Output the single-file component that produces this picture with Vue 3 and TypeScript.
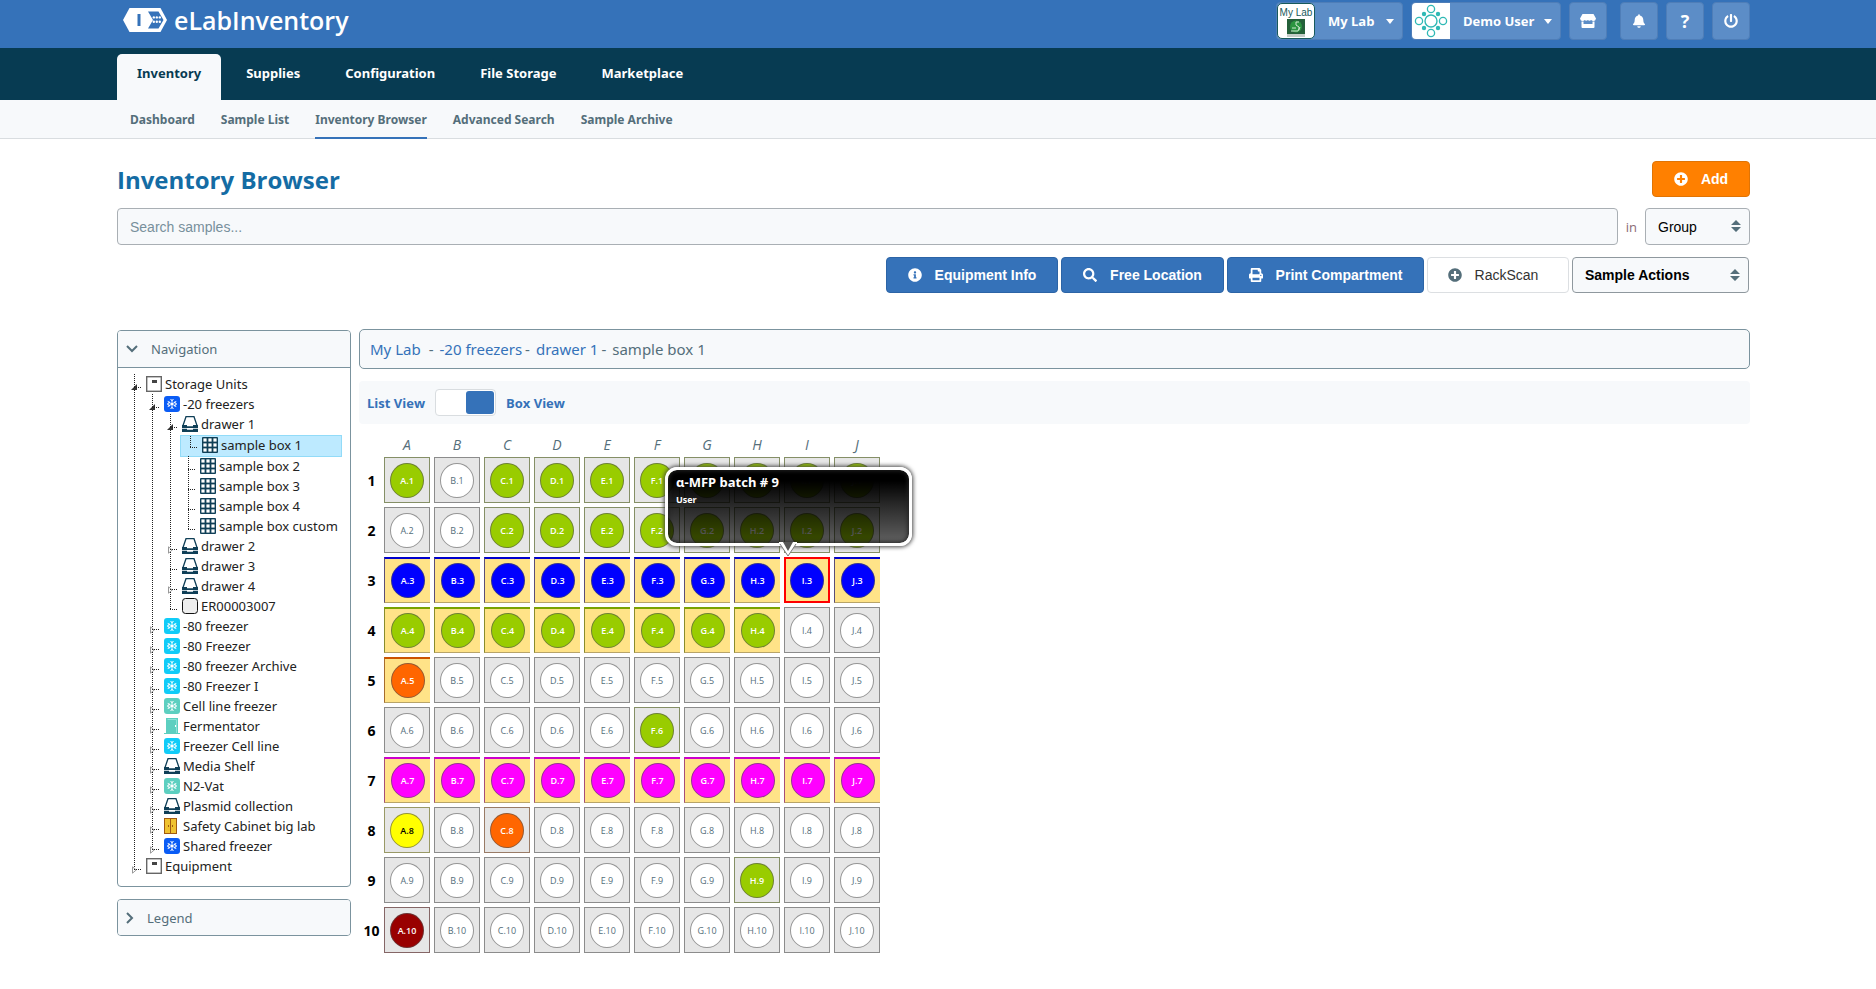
<script setup lang="ts">
import { ref } from 'vue'

type IconName = 'unit' | 'freezer' | 'drawer' | 'box' | 'blank' | 'door' | 'cabinet'

interface TreeRow {
  label: string
  icon: IconName
  color?: string
  /** One entry per indent level; the last entry is the branch of the row itself. */
  guides: ('line' | 'tee' | 'end' | 'none')[]
  toggle?: 'open' | 'closed'
  selected?: boolean
}

interface Well {
  id: string
  color: string
  marked: boolean
  dark: boolean
}

const mainTabs = ['Inventory', 'Supplies', 'Configuration', 'File Storage', 'Marketplace']
const subTabs = ['Dashboard', 'Sample List', 'Inventory Browser', 'Advanced Search', 'Sample Archive']

const BLUE = '#0a5cf5'
const CYAN = '#10ccf8'
const TEAL = '#5ccfc0'

const child = (
  label: string,
  icon: IconName,
  color?: string,
  toggle?: 'open' | 'closed',
  last = false,
): TreeRow => ({ label, icon, color, toggle, guides: ['line', last ? 'end' : 'tee'] })

const tree: TreeRow[] = [
  { label: 'Storage Units', icon: 'unit', guides: ['tee'], toggle: 'open' },
  child('-20 freezers', 'freezer', BLUE, 'open'),
  { label: 'drawer 1', icon: 'drawer', guides: ['line', 'line', 'tee'], toggle: 'open' },
  { label: 'sample box 1', icon: 'box', guides: ['line', 'line', 'line', 'end'], selected: true },
  { label: 'sample box 2', icon: 'box', guides: ['line', 'line', 'line', 'tee'] },
  { label: 'sample box 3', icon: 'box', guides: ['line', 'line', 'line', 'tee'] },
  { label: 'sample box 4', icon: 'box', guides: ['line', 'line', 'line', 'tee'] },
  { label: 'sample box custom', icon: 'box', guides: ['line', 'line', 'line', 'end'] },
  { label: 'drawer 2', icon: 'drawer', guides: ['line', 'line', 'tee'], toggle: 'closed' },
  { label: 'drawer 3', icon: 'drawer', guides: ['line', 'line', 'tee'] },
  { label: 'drawer 4', icon: 'drawer', guides: ['line', 'line', 'tee'], toggle: 'closed' },
  { label: 'ER00003007', icon: 'blank', guides: ['line', 'line', 'end'] },
  child('-80 freezer', 'freezer', CYAN, 'closed'),
  child('-80 Freezer', 'freezer', CYAN, 'closed'),
  child('-80 freezer Archive', 'freezer', CYAN, 'closed'),
  child('-80 Freezer I', 'freezer', CYAN, 'closed'),
  child('Cell line freezer', 'freezer', TEAL, 'closed'),
  child('Fermentator', 'door', TEAL, 'closed'),
  child('Freezer Cell line', 'freezer', CYAN, 'closed'),
  child('Media Shelf', 'drawer', undefined, 'closed'),
  child('N2-Vat', 'freezer', TEAL, 'closed'),
  child('Plasmid collection', 'drawer', undefined, 'closed'),
  child('Safety Cabinet big lab', 'cabinet', undefined, 'closed'),
  child('Shared freezer', 'freezer', BLUE, 'closed', true),
  { label: 'Equipment', icon: 'unit', guides: ['end'], toggle: 'closed' },
]

const columns = 'ABCDEFGHIJ'.split('')
const palette: Record<string, string> = {
  g: '#99cc00',
  b: '#0000ff',
  m: '#ff00ff',
  o: '#ff6600',
  y: '#ffff00',
  r: '#990000',
  '.': '',
}
const layout = [
  'g.gggggggg',
  '..gggggggg',
  'BBBBBBBBBB',
  'GGGGGGGG..',
  'O.........',
  '.....g....',
  'MMMMMMMMMM',
  'y.o.......',
  '.......g..',
  'r.........',
]
const wells: Well[][] = layout.map((line, r) =>
  line.split('').map((code, c) => ({
    id: `${columns[c]}.${r + 1}`,
    color: palette[code.toLowerCase()],
    marked: code !== code.toLowerCase(),
    dark: code === 'y',
  })),
)

const query = ref('')
const scope = ref('Group')
const action = ref('Sample Actions')
const boxView = ref(true)
const hovered = ref('I.3')

const paths = {
  plus: 'M256 8C119 8 8 119 8 256s111 248 248 248 248-111 248-248S393 8 256 8zm144 276c0 6.6-5.4 12-12 12h-92v92c0 6.6-5.4 12-12 12h-56c-6.6 0-12-5.4-12-12v-92h-92c-6.6 0-12-5.4-12-12v-56c0-6.6 5.4-12 12-12h92v-92c0-6.6 5.4-12 12-12h56c6.6 0 12 5.4 12 12v92h92c6.6 0 12 5.4 12 12v56z',
  info: 'M256 8C119.043 8 8 119.083 8 256c0 136.997 111.043 248 248 248s248-111.003 248-248C504 119.083 392.957 8 256 8zm0 110c23.196 0 42 18.804 42 42s-18.804 42-42 42-42-18.804-42-42 18.804-42 42-42zm56 254c0 6.627-5.373 12-12 12h-88c-6.627 0-12-5.373-12-12v-24c0-6.627 5.373-12 12-12h12v-64h-12c-6.627 0-12-5.373-12-12v-24c0-6.627 5.373-12 12-12h64c6.627 0 12 5.373 12 12v100h12c6.627 0 12 5.373 12 12v24z',
  search: 'M505 442.7L405.3 343c-4.5-4.5-10.6-7-17-7H372c27.6-35.3 44-79.7 44-128C416 93.1 322.9 0 208 0S0 93.1 0 208s93.1 208 208 208c48.3 0 92.7-16.4 128-44v16.3c0 6.4 2.5 12.5 7 17l99.7 99.7c9.4 9.4 24.6 9.4 33.9 0l28.3-28.3c9.4-9.4 9.4-24.6.1-34zM208 336c-70.7 0-128-57.2-128-128 0-70.7 57.2-128 128-128 70.7 0 128 57.2 128 128 0 70.7-57.2 128-128 128z',
  print: 'M448 192V77.25c0-8.49-3.37-16.62-9.37-22.63L393.37 9.37c-6-6-14.14-9.37-22.63-9.37H96C78.33 0 64 14.33 64 32v160c-35.35 0-64 28.65-64 64v112c0 8.84 7.16 16 16 16h48v96c0 17.67 14.33 32 32 32h320c17.67 0 32-14.33 32-32v-96h48c8.84 0 16-7.16 16-16V256c0-35.35-28.65-64-64-64zm-64 256H128v-96h256v96zm0-224H128V64h192v48c0 8.84 7.16 16 16 16h48v96zm48 72c-13.25 0-24-10.75-24-24 0-13.26 10.75-24 24-24s24 10.74 24 24c0 13.25-10.75 24-24 24z',
}
const tools = [
  { label: 'Equipment Info', path: paths.info, cls: 'equipment' },
  { label: 'Free Location', path: paths.search, cls: 'location' },
  { label: 'Print Compartment', path: paths.print, cls: 'print' },
]
</script>

<template>
  <div class="page">
    <header class="top">
      <a class="brand" href="#">
        <svg width="44" height="24" viewBox="0 0 44 24" aria-hidden="true">
          <path d="M6.5 0H37.5L44 12L37.5 24H6.5L0 12Z" fill="#fff" />
          <path d="M14.5 6h3v12h-3z" fill="#3572b9" />
          <path d="M25 3.5H35.5L40.5 12L35.5 20.5H25L30 12Z" fill="#3572b9" />
          <g fill="#fff">
            <circle v-for="x in 3" :key="x" :cx="27.8 + x * 3" cy="9.4" r="1.2" />
            <circle v-for="x in 3" :key="x + 3" :cx="27.8 + x * 3" cy="13.8" r="1.2" />
          </g>
        </svg>
        <span>eLabInventory</span>
      </a>
      <div class="user-tools">
        <button class="chip lab" type="button">
          <span class="avatar lab-avatar">
            <span class="lab-name">My Lab</span>
            <svg width="18" height="18" viewBox="0 0 18 18" aria-hidden="true">
              <rect width="18" height="15" fill="#24603a" />
              <rect y="15" width="18" height="3" fill="#c3cdc8" />
              <circle cx="9" cy="7.5" r="6" fill="#2b9440" />
              <path d="M4 12h7l2-4M12 3h-3v3l3 2v3M5 9h4" stroke="#cfe8d2" fill="none" />
            </svg>
          </span>
          <span class="chip-text">My Lab</span>
          <svg class="caret" width="8" height="5" viewBox="0 0 8 5" aria-hidden="true"><path d="M0 0h8L4 5z" fill="#fff" /></svg>
        </button>
        <button class="chip user" type="button">
          <span class="avatar">
            <svg width="34" height="34" viewBox="0 0 34 34" fill="none" stroke="#2fb9b5" aria-hidden="true">
              <circle cx="17" cy="17" r="6" stroke-width="1.4" />
              <g stroke-width="1.3">
                <circle cx="17" cy="5" r="3.6" /><circle cx="17" cy="29" r="3.6" />
                <circle cx="5" cy="17" r="3.6" /><circle cx="29" cy="17" r="3.6" />
              </g>
              <g fill="#2fb9b5" stroke="none">
                <circle cx="10" cy="10" r="2.2" /><circle cx="24" cy="10" r="2.2" />
                <circle cx="10" cy="24" r="2.2" /><circle cx="24" cy="24" r="2.2" />
              </g>
            </svg>
          </span>
          <span class="chip-text">Demo User</span>
          <svg class="caret" width="8" height="5" viewBox="0 0 8 5" aria-hidden="true"><path d="M0 0h8L4 5z" fill="#fff" /></svg>
        </button>
        <button class="square store" type="button" aria-label="Marketplace">
          <svg width="16" height="14" viewBox="0 0 16 14" fill="#fff" aria-hidden="true">
            <path d="M2.5 0h11L16 4.5Q15.5 7 13.5 7Q12 7 11.2 6Q10 7 9 6.7Q8 6 8 6Q6 7.6 4.8 6Q4 7 2.5 7Q.5 7 0 4.5ZM1.5 7.5h2V10h9V7.5h2V13q0 1-1 1h-11q-1 0-1-1Z" />
          </svg>
        </button>
        <button class="square" type="button" aria-label="Notifications">
          <svg width="12" height="14" viewBox="0 0 448 512" fill="#fff" aria-hidden="true">
            <path d="M224 512c35.32 0 63.97-28.65 63.97-64H160.03c0 35.35 28.65 64 63.97 64zm215.39-149.71c-19.32-20.76-55.47-51.99-55.47-154.29 0-77.7-54.48-139.9-127.94-155.16V32c0-17.67-14.32-32-31.98-32s-31.98 14.33-31.98 32v20.84C118.56 68.1 64.08 130.3 64.08 208c0 102.3-36.15 133.53-55.47 154.29-6 6.45-8.66 14.16-8.61 21.71.11 16.4 12.98 32 32.1 32h383.8c19.12 0 32-15.6 32.1-32 .05-7.55-2.61-15.27-8.61-21.71z" />
          </svg>
        </button>
        <button class="square help" type="button" aria-label="Help">?</button>
        <button class="square" type="button" aria-label="Log out">
          <svg width="14" height="14" viewBox="0 0 512 512" fill="#fff" aria-hidden="true">
            <path d="M400 54.1c63 45 104 118.6 104 201.9 0 136.8-110.8 247.7-247.5 248C120 504.3 8.2 393 8 256.4 7.9 173.1 48.9 99.3 111.8 54.2c11.7-8.3 28-4.8 35 7.7L162.6 90c5.9 10.5 3.1 23.8-6.6 31-41.5 30.8-68 79.6-68 134.9-.1 92.3 74.5 168.1 168 168.1 91.6 0 168.6-74.2 168-169.1-.3-51.8-24.7-101.8-68.1-134-9.7-7.2-12.4-20.5-6.5-30.9l15.8-28.1c7-12.4 23.2-16.1 34.8-7.8zM296 264V24c0-13.3-10.7-24-24-24h-32c-13.3 0-24 10.7-24 24v240c0 13.3 10.7 24 24 24h32c13.3 0 24-10.7 24-24z" />
          </svg>
        </button>
      </div>
    </header>

    <nav class="tabs" aria-label="Main">
      <a v-for="(tab, i) in mainTabs" :key="tab" href="#" :class="{ active: i === 0 }">{{ tab }}</a>
    </nav>
    <nav class="subtabs" aria-label="Inventory">
      <a v-for="(tab, i) in subTabs" :key="tab" href="#" :class="{ active: i === 2 }">{{ tab }}</a>
    </nav>

    <main>
      <div class="title-row">
        <h1>Inventory Browser</h1>
        <button class="btn add" type="button">
          <svg width="14" height="14" viewBox="0 0 512 512" fill="#fff" aria-hidden="true"><path :d="paths.plus" /></svg>
          Add
        </button>
      </div>

      <div class="search-row">
        <input v-model="query" type="search" placeholder="Search samples..." aria-label="Search samples" />
        <label for="scope">in</label>
        <span class="select scope">
          <select id="scope" v-model="scope"><option>Group</option></select>
          <svg width="10" height="12" viewBox="0 0 10 12" fill="#546e7a" aria-hidden="true"><path d="M5 0l5 5H0zM5 12l5-5H0z" /></svg>
        </span>
      </div>

      <div class="tool-row">
        <button v-for="tool in tools" :key="tool.label" class="btn primary" :class="tool.cls" type="button">
          <svg width="14" height="14" viewBox="0 0 512 512" fill="#fff" aria-hidden="true"><path :d="tool.path" /></svg>
          {{ tool.label }}
        </button>
        <button class="btn plain" type="button">
          <svg width="14" height="14" viewBox="0 0 512 512" fill="#546e7a" aria-hidden="true"><path :d="paths.plus" /></svg>
          RackScan
        </button>
        <span class="select actions">
          <select v-model="action" aria-label="Sample Actions"><option>Sample Actions</option></select>
          <svg width="10" height="12" viewBox="0 0 10 12" fill="#546e7a" aria-hidden="true"><path d="M5 0l5 5H0zM5 12l5-5H0z" /></svg>
        </span>
      </div>

      <div class="columns">
        <aside>
          <section class="panel">
            <button class="panel-head" type="button" aria-expanded="true">
              <svg width="12" height="12" viewBox="0 0 12 12" fill="none" stroke="#546e7a" stroke-width="2" aria-hidden="true"><path d="M1 3l5 5 5-5" /></svg>
              Navigation
            </button>
            <ul class="tree">
              <li v-for="row in tree" :key="row.label" :class="{ selected: row.selected }">
                <span v-for="(guide, i) in row.guides.slice(0, -1)" :key="i" class="guide" :class="guide"></span>
                <span class="node">
                  <span class="guide" :class="row.guides[row.guides.length - 1]">
                    <svg v-if="row.toggle === 'open'" class="twisty" width="6" height="6" viewBox="0 0 6 6" aria-hidden="true"><path d="M6 0v6H0z" fill="#333" /></svg>
                    <svg v-else-if="row.toggle" class="twisty closed" width="5" height="8" viewBox="0 0 5 8" aria-hidden="true"><path d="M.5 .8v6.4L4.2 4z" fill="#fff" stroke="#999" /></svg>
                  </span>
                  <svg class="icon" width="16" height="16" viewBox="0 0 16 16" aria-hidden="true">
                    <template v-if="row.icon === 'unit'">
                      <rect x=".7" y=".7" width="14.6" height="14.6" fill="#fff" stroke="#666" stroke-width="1.4" />
                      <path d="M6 4h5v3H6z" fill="#444" />
                    </template>
                    <template v-else-if="row.icon === 'freezer'">
                      <rect width="16" height="16" rx="3" :fill="row.color" />
                      <g stroke="#fff" fill="none" stroke-width=".9">
                        <path d="M8 3v10M3.7 5.5l8.6 5M3.7 10.5l8.6-5" />
                        <path d="M6.5 3.3L8 4.8l1.5-1.5M6.5 12.7L8 11.2l1.5 1.5M3.3 7.6l2-.5-.5-2M11.2 5.1l-.5 2 2 .5M12.7 8.4l-2 .5.5 2M4.8 10.9l.5-2-2-.5" />
                      </g>
                      <circle cx="8" cy="8" r="1.2" fill="#fff" />
                    </template>
                    <template v-else-if="row.icon === 'drawer'">
                      <path d="M1 9.5L4 .7h8l3 8.8" fill="#fff" stroke="#0f3f57" stroke-width="1.3" />
                      <path d="M0 9h5v1.2h6V9h5v3H0zM0 12.8h5v1h6v-1h5V16H0z" fill="#0f3f57" />
                    </template>
                    <template v-else-if="row.icon === 'box'">
                      <rect width="16" height="16" rx="1" fill="#0f3f57" />
                      <template v-for="y in 3" :key="y">
                        <rect v-for="x in 3" :key="x" :x="x * 5 - 3.6" :y="y * 5 - 3.6" width="3.2" height="3.2" fill="#fff" />
                      </template>
                    </template>
                    <rect v-else-if="row.icon === 'blank'" x=".5" y=".5" width="15" height="15" rx="3" fill="#eee" stroke="#111" />
                    <template v-else-if="row.icon === 'door'">
                      <path d="M2 0h12v15h2v1H0v-1h2z" :fill="row.color" />
                      <path d="M3.5 1.5h9V15" stroke="#8be4d8" fill="none" />
                      <path d="M11 7h1v2h-1z" fill="#fff" />
                    </template>
                    <template v-else>
                      <rect x=".5" y=".5" width="12" height="15" fill="#f0c230" stroke="#a05a10" />
                      <path d="M6.5 0v16M4.5 7v2M8.5 7v2" stroke="#a05a10" />
                    </template>
                  </svg>
                  <a href="#">{{ row.label }}</a>
                </span>
              </li>
            </ul>
          </section>
          <section class="panel">
            <button class="panel-head legend" type="button" aria-expanded="false">
              <svg width="8" height="12" viewBox="0 0 8 12" fill="none" stroke="#546e7a" stroke-width="2" aria-hidden="true"><path d="M1 1l5 5-5 5" /></svg>
              Legend
            </button>
          </section>
        </aside>

        <section class="content">
          <nav class="crumbs" aria-label="Location">
            <a href="#">My Lab</a><span class="sep first">-</span><a href="#">-20 freezers</a><span class="sep">-</span><a href="#">drawer 1</a><span class="sep">-</span><span>sample box 1</span>
          </nav>
          <div class="view-bar">
            <label for="view">List View</label>
            <input id="view" v-model="boxView" type="checkbox" role="switch" />
            <label for="view">Box View</label>
          </div>
          <table class="box">
            <thead>
              <tr>
                <td></td>
                <th v-for="c in columns" :key="c" scope="col">{{ c }}</th>
              </tr>
            </thead>
            <tbody>
              <tr v-for="(line, r) in wells" :key="r">
                <th scope="row">{{ r + 1 }}</th>
                <td
                  v-for="well in line"
                  :key="well.id"
                  class="cell"
                  :class="{ filled: well.color, marked: well.marked, hovered: well.id === hovered }"
                  :style="well.color ? { '--well': well.color } : undefined"
                >
                  <span class="well" :class="{ dark: well.dark }">{{ well.id }}</span>
                  <div v-if="well.id === hovered" class="tip" role="tooltip">
                    <strong>α-MFP batch # 9</strong>
                    <span>User</span>
                    <svg class="pointer" width="18" height="15" viewBox="0 0 18 15" aria-hidden="true">
                      <path d="M1 2L9 14L17 2" fill="#fff" stroke="#777" />
                      <path d="M0 0h18v2H0z" fill="#fff" />
                      <path d="M4 0L9 9L14 0Z" fill="#555" />
                    </svg>
                  </div>
                </td>
              </tr>
            </tbody>
          </table>
        </section>
      </div>
    </main>
  </div>
</template>

<style>
body {
  background: #fff;
}
</style>

<style scoped>
.page {
  font-family: "Open Sans", "Noto Sans", sans-serif;
  font-size: 14px;
  color: #546e7a;
}
.page * {
  box-sizing: border-box;
}
a {
  color: inherit;
  text-decoration: none;
}
button,
input,
select {
  margin: 0;
  font-family: inherit;
  font-size: 14px;
}
.top,
.tabs,
.subtabs,
main {
  padding: 0 126px 0 117px;
}
.top {
  display: flex;
  justify-content: space-between;
  height: 48px;
  background: #3572b9;
}
.brand {
  display: flex;
  align-items: center;
  gap: 7px;
  height: 40px;
  padding-left: 6px;
  color: #fff;
  font-size: 25px;
  font-weight: 600;
}
.user-tools {
  display: flex;
  gap: 8px;
  padding-top: 2px;
}
.chip,
.square {
  display: flex;
  align-items: center;
  height: 38px;
  padding: 0;
  border: 1px solid #4f7eb8;
  border-radius: 4px;
  background: #5c8dc7;
  color: #fff;
  font-weight: 700;
}
.chip {
  font-size: 13px;
}
.chip.lab {
  width: 127px;
}
.chip.user {
  width: 150px;
}
.chip-text {
  flex: 1;
  padding-left: 13px;
  text-align: left;
}
.caret {
  margin-right: 8px;
}
.avatar {
  display: flex;
  flex-direction: column;
  align-items: center;
  justify-content: center;
  width: 38px;
  height: 36px;
  border-radius: 4px 0 0 4px;
  background: #fff;
}
.lab-avatar {
  border: 1px solid #175a5c;
  border-radius: 5px;
}
.lab-name {
  font: 10px/13px "Liberation Sans", Arial, sans-serif;
  color: #175a5c;
}
.square {
  justify-content: center;
  width: 38px;
}
.store {
  margin-right: 5px;
}
.help {
  font-size: 18px;
}
.tabs,
.subtabs {
  font-family: "Noto Sans", "Open Sans", sans-serif;
}
.tabs {
  display: flex;
  align-items: flex-end;
  gap: 5px;
  height: 52px;
  background: #073b52;
}
.tabs a {
  height: 46px;
  padding: 0 20px;
  border-radius: 5px 5px 0 0;
  color: #fff;
  font-size: 13px;
  font-weight: 700;
  line-height: 39px;
}
.tabs .active {
  background: #f7f9fb;
  color: #073b52;
}
.subtabs {
  display: flex;
  gap: 26px;
  height: 39px;
  padding-left: 130px;
  border-bottom: 1px solid #d9dde0;
  background: #f7f9fb;
}
.subtabs a {
  height: 39px;
  font-size: 12px;
  font-weight: 700;
  line-height: 39px;
}
.subtabs .active {
  border-bottom: 2px solid #3572b9;
}
.title-row {
  display: flex;
  align-items: center;
  justify-content: space-between;
  height: 36px;
  margin-top: 22px;
}
h1 {
  margin: 0;
  color: #146ca4;
  font-size: 24px;
  font-weight: 700;
}
.btn {
  display: flex;
  align-items: center;
  justify-content: center;
  gap: 13px;
  height: 36px;
  padding: 0;
  border-radius: 4px;
  font: 700 14px/20px "Liberation Sans", Arial, sans-serif;
}
.add {
  width: 98px;
  border: 1px solid #e07405;
  background: #ff8000;
  color: #fff;
}
.search-row {
  display: flex;
  align-items: center;
  gap: 8px;
  margin-top: 11px;
}
.search-row input,
.select select {
  height: 37px;
  border: 1px solid #a9afb4;
  border-radius: 4px;
  background: #f7f9fb;
  font-family: "Liberation Sans", Arial, sans-serif;
  appearance: none;
}
.search-row input {
  flex: 1;
  min-width: 0;
  padding: 0 12px;
}
.search-row input::placeholder {
  color: #78909c;
}
.search-row label {
  color: #8a6a76;
  font-size: 13px;
}
.select {
  position: relative;
  display: flex;
}
.select select {
  width: 100%;
  padding: 0 12px;
  color: #000;
}
.select svg {
  position: absolute;
  top: 12px;
  right: 9px;
  pointer-events: none;
}
.scope {
  width: 105px;
}
.actions {
  width: 177px;
}
.actions select {
  height: 36px;
  border-color: #8f989e;
  font-weight: 700;
}
.tool-row {
  display: flex;
  justify-content: flex-end;
  gap: 3px;
  margin-top: 12px;
  padding-right: 1px;
}
.primary {
  border: 1px solid #2c64a6;
  background: #3572b9;
  color: #fff;
}
.equipment {
  width: 172px;
}
.location {
  width: 163px;
}
.print {
  width: 197px;
}
.plain {
  width: 142px;
  padding-right: 10px;
  border: 1px solid #dcdfe2;
  background: #fff;
  color: #333;
  font-weight: 400;
}
.columns {
  display: flex;
  align-items: flex-start;
  gap: 8px;
  margin-top: 36px;
}
aside {
  display: grid;
  gap: 12px;
  width: 234px;
  padding-top: 1px;
}
.panel {
  border: 1px solid #7b939e;
  border-radius: 4px;
  overflow: hidden;
}
.panel-head {
  display: flex;
  align-items: center;
  gap: 13px;
  width: 100%;
  height: 36px;
  padding: 0 8px;
  border: 0;
  background: #f7f9fb;
  color: #546e7a;
  font-family: "Noto Sans", "Open Sans", sans-serif;
  font-size: 13px;
}
.tree {
  margin: 0;
  padding: 6px 8px 10px 10px;
  border-top: 1px solid #7b939e;
  list-style: none;
  color: #222;
}
.tree li,
.node {
  display: flex;
  height: 20px;
  white-space: nowrap;
}
.tree li.selected {
  height: 22px;
}
.selected .node {
  flex: 1;
  height: 22px;
  margin: 1px 0 0 -2px;
  padding-left: 3px;
  border: 1px solid #92dbf8;
  background: #bdeaff;
}
.guide {
  position: relative;
  flex: none;
  width: 18px;
}
.guide::before {
  content: "";
  position: absolute;
  inset: 0 auto 0 6px;
  width: 1px;
  background: repeating-linear-gradient(#222 0 1px, transparent 1px 2px);
}
.guide.end::before {
  bottom: 6px;
}
.guide.tee::after,
.guide.end::after {
  content: "";
  position: absolute;
  top: 13px;
  left: 6px;
  width: 7px;
  height: 1px;
  background: repeating-linear-gradient(90deg, #222 0 1px, transparent 1px 2px);
}
.selected .guide.end::before {
  bottom: 8px;
}
.selected .guide.end::after {
  top: 11px;
}
.twisty {
  position: absolute;
  top: 10px;
  left: 3px;
}
.twisty.closed {
  left: 4px;
}
.icon {
  flex: none;
  margin-top: 2px;
}
.selected .icon {
  margin-top: 1px;
}
.node a {
  padding-left: 3px;
  font-family: "Noto Sans", "Open Sans", sans-serif;
  font-size: 13px;
  line-height: 20px;
}
.selected a {
  line-height: 19px;
}
.legend {
  height: 35px;
}
.content {
  flex: 1;
  min-width: 0;
}
.crumbs {
  display: flex;
  align-items: center;
  height: 40px;
  padding-left: 10px;
  border: 1px solid #7b939e;
  border-radius: 5px;
  background: #f7f9fb;
  font-family: "Noto Sans", "Open Sans", sans-serif;
  font-size: 15px;
}
.crumbs a {
  color: #3572b9;
}
.sep {
  padding: 0 6px 0 3px;
}
.sep.first {
  padding-left: 8px;
}
.view-bar {
  display: flex;
  align-items: center;
  gap: 10px;
  height: 43px;
  margin-top: 12px;
  padding: 0 8px;
  border-radius: 4px;
  background: #f7f9fb;
  color: #3572b9;
  font-size: 13px;
  font-weight: 700;
}
.view-bar input {
  display: flex;
  width: 61px;
  height: 27px;
  padding: 1px;
  border: 1px solid #d9dde0;
  border-radius: 4px;
  background: #fff;
  appearance: none;
}
.view-bar input::before {
  content: "";
  width: 28px;
  border-radius: 3px;
  background: #3572b9;
}
.view-bar input:checked {
  justify-content: flex-end;
}
.box {
  margin-top: 9px;
  border-spacing: 4px;
  table-layout: fixed;
}
.box th,
.box td {
  padding: 0;
}
thead th {
  height: 16px;
  font-weight: 400;
  font-style: italic;
  line-height: 16px;
}
tbody th {
  width: 17px;
  color: #000;
  font-size: 14px;
  font-weight: 700;
}
.cell {
  --well: #fff;
  position: relative;
  width: 46px;
  height: 46px;
  border: 1px solid #8c8c8c;
  background: #e6e6e6;
}
.cell.filled {
  border-color: color-mix(in srgb, var(--well) 20%, #808080);
}
.cell.marked {
  border-width: 2px 0 1px 1px;
  border-top-color: color-mix(in srgb, var(--well) 80%, #000);
  border-left-color: color-mix(in srgb, var(--well) 30%, #807040);
  border-bottom-color: #b8a468;
  background: #ffe388;
}
.cell.hovered {
  border: 2px solid #f00;
}
.well {
  display: flex;
  align-items: center;
  justify-content: center;
  width: 34px;
  height: 35px;
  margin: 0 auto;
  border: 1px solid rgba(80, 80, 80, 0.6);
  border-radius: 50%;
  background: var(--well);
  font-size: 9px;
}
.filled .well {
  color: #fff;
  font-weight: 600;
}
.filled .dark {
  color: #000;
}
.tip {
  position: absolute;
  z-index: 1;
  bottom: 55px;
  left: -121px;
  display: flex;
  flex-direction: column;
  width: 247px;
  height: 79px;
  padding: 3px 8px;
  border: 3px solid #fff;
  border-radius: 12px;
  background: linear-gradient(#000 15%, rgba(0, 0, 0, 0.85) 45%, rgba(0, 0, 0, 0.62)) padding-box;
  box-shadow: 0 0 4px 1px #444, inset 0 0 4px 1px #222;
  color: #fff;
}
.tip strong {
  font-family: "Noto Sans", "Open Sans", sans-serif;
  font-size: 13px;
  line-height: 18px;
}
.tip span {
  font-size: 9px;
  font-weight: 700;
  line-height: 18px;
}
.pointer {
  position: absolute;
  top: 72px;
  left: 111px;
}
</style>
